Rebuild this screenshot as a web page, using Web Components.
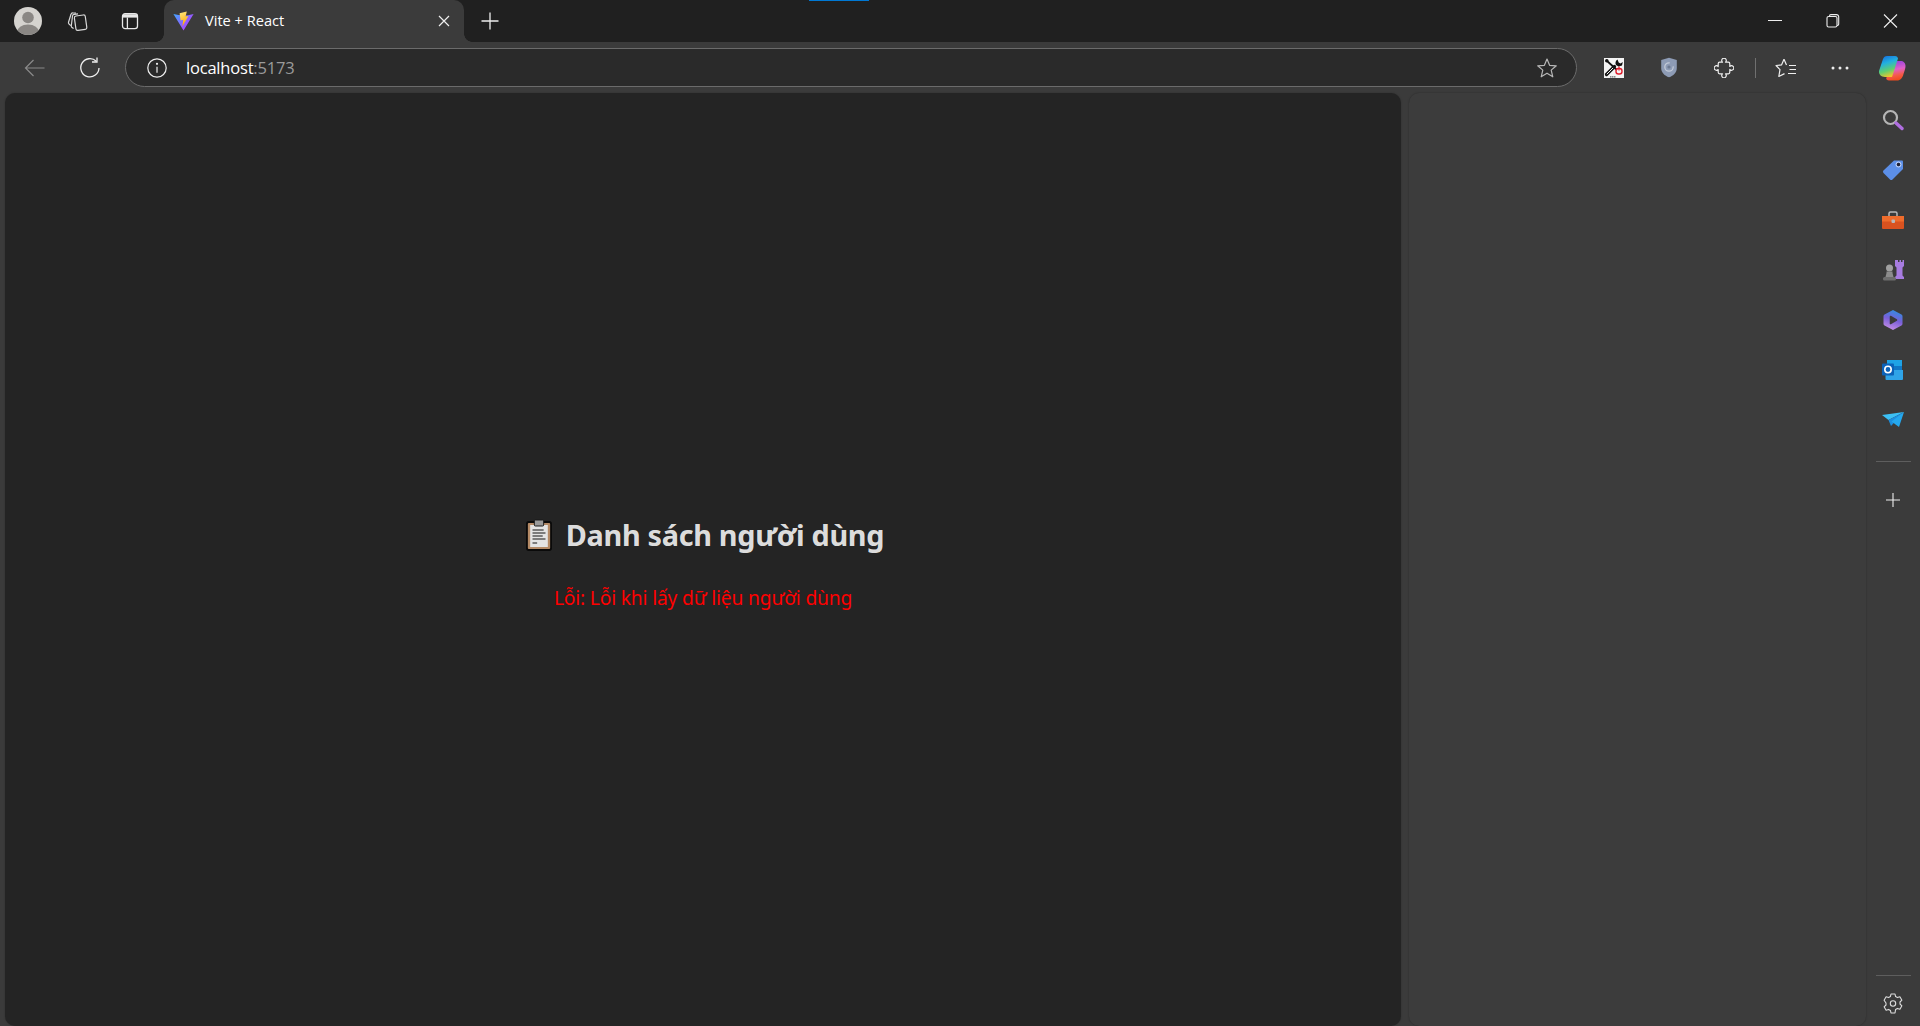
<!DOCTYPE html>
<html>
<head>
<meta charset="utf-8">
<title>Vite + React</title>
<style>
  html, body { margin: 0; height: 100%; background: #3b3b3b; overflow: hidden; }
  body { font-family: "Noto Sans", "Open Sans", sans-serif; }
</style>
</head>
<body>
<browser-window>
  <tab-strip slot="strip"></tab-strip>
  <nav-toolbar slot="toolbar"></nav-toolbar>
  <page-view slot="page">
    <user-list></user-list>
  </page-view>
  <side-panel slot="panel"></side-panel>
  <icon-rail slot="rail"></icon-rail>
</browser-window>

<script>
class BrowserWindow extends HTMLElement {
  connectedCallback() {
    this.attachShadow({ mode: 'open' });
    this.shadowRoot.innerHTML = `
      <style>
        :host { display: flex; flex-direction: column; width: 1920px; height: 1026px; background: #3b3b3b; }
        .content { flex: 1; display: flex; min-height: 0; padding-left: 5px; }
      </style>
      <slot name="strip"></slot>
      <slot name="toolbar"></slot>
      <div class="content">
        <slot name="page"></slot>
        <slot name="panel"></slot>
        <slot name="rail"></slot>
      </div>
    `;
  }
}

class TabStrip extends HTMLElement {
  connectedCallback() {
    this.attachShadow({ mode: 'open' });
    this.shadowRoot.innerHTML = `
      <style>
        :host { display: flex; align-items: center; height: 42px; background: #202020; position: relative; color: #fff; }
        svg { display: block; flex: none; }
        .left { display: flex; align-items: center; height: 42px; padding-left: 14px; width: 164px; box-sizing: border-box; flex: none; }
        .avatar { width: 28px; height: 28px; }
        .collections { margin-left: 24px; width: 22px; height: 22px; }
        .tabs-btn { margin-left: 32px; width: 20px; height: 20px; }
        .tab { width: 300px; height: 42px; background: #3b3b3b; border-radius: 10px 10px 0 0; display: flex; align-items: center; box-sizing: border-box; padding: 0 13px 0 9px; position: relative; flex: none; }
        .tab::before, .tab::after { content: ''; position: absolute; bottom: 0; width: 8px; height: 8px; }
        .tab::before { left: -8px; background: radial-gradient(circle at 0 0, transparent 7.5px, #3b3b3b 8px); }
        .tab::after { right: -8px; background: radial-gradient(circle at 100% 0, transparent 7.5px, #3b3b3b 8px); }
        .fav { width: 21px; height: 20px; }
        .title { margin: 0 0 2px 11px; flex: 1; white-space: nowrap; font-family: "Open Sans", "Noto Sans", sans-serif; font-size: 14.6px; }
        .close { width: 14px; height: 14px; }
        .plus { margin-left: 16px; width: 20px; height: 20px; }
        .spacer { flex: 1; }
        .wc { display: flex; align-items: center; height: 42px; }
        .wc svg { width: 58px; height: 14px; }
        .accent { position: absolute; top: 0; left: 809px; width: 60px; height: 1px; background: #0078d4; }
      </style>
      <div class="left">
        <svg class="avatar" viewBox="0 0 28 28">
          <defs><clipPath id="av"><circle cx="14" cy="14" r="14"/></clipPath></defs>
          <circle cx="14" cy="14" r="14" fill="#d5d3cf"/>
          <g clip-path="url(#av)" fill="#8a8784"><circle cx="14" cy="10.5" r="5.8"/><ellipse cx="14" cy="25" rx="11" ry="7.5"/></g>
        </svg>
        <svg class="collections" viewBox="0 0 22 22" fill="none" stroke="#d8d8d8" stroke-width="1.2" stroke-linejoin="round">
          <rect x="9" y="5.500" width="11" height="14.500" rx="1.800" transform="rotate(-8 14 12)"/>
          <path d="M7.600 18.500 6 17.400a1.600 1.600 0 0 1-.7-1.600L6.500 6a1.800 1.800 0 0 1 1.800-1.600L12 3.800"/>
          <path d="M4.800 15.600 3 14a1.600 1.600 0 0 1-.5-1.700L5 4.300A1.800 1.800 0 0 1 7 3l3 .2"/>
        </svg>
        <svg class="tabs-btn" viewBox="0 0 20 20" fill="none" stroke="#e8e8e8" stroke-width="1.3">
          <rect x="2.500" y="2.600" width="15" height="15" rx="2.600"/>
          <path d="M3 3.200h14v3.400H3z" fill="#e8e8e8" stroke="none"/>
          <path d="M7.400 6.500v11"/>
        </svg>
      </div>
      <div class="tab">
        <svg class="fav" viewBox="0 0 21 20">
          <defs>
            <linearGradient id="vb" x1="0" y1="0" x2="1" y2="0.7"><stop offset="0" stop-color="#41a8ff"/><stop offset="1" stop-color="#bd34fe"/></linearGradient>
            <linearGradient id="vy" x1="0" y1="0" x2="0.3" y2="1"><stop offset="0" stop-color="#ffea83"/><stop offset="1" stop-color="#ffa800"/></linearGradient>
          </defs>
          <path d="M0.400 3 10.500 19.600 20.600 3 15 4.200 10.500 4.600 5.500 4z" fill="url(#vb)"/>
          <path d="M6.600 2.200 13.800 0.500 12.600 5.600 15.400 5 9.400 15.400 10.200 8.800 7.600 9.400z" fill="url(#vy)"/>
        </svg>
        <span class="title">Vite + React</span>
        <svg class="close" viewBox="0 0 14 14" stroke="#eee" stroke-width="1.200"><path d="M2 2l10 10M12 2 2 12"/></svg>
      </div>
      <svg class="plus" viewBox="0 0 20 20" stroke="#eee" stroke-width="1.300"><path d="M10 1.500v17M1.500 10h17"/></svg>
      <div class="spacer"></div>
      <div class="wc">
        <svg viewBox="0 0 58 14" stroke="#eee" stroke-width="1" fill="none"><path d="M22 6.500h14"/></svg>
        <svg viewBox="0 0 58 14" stroke="#eee" stroke-width="1.100" fill="none"><rect x="23" y="2.500" width="10" height="10.500" rx="1.600"/><path d="M25.500 2.500V2a1.400 1.400 0 0 1 1.400-1.400h5.600A2.200 2.200 0 0 1 34.700 2.800v7A1.600 1.600 0 0 1 33 11.500"/></svg>
        <svg viewBox="0 0 58 14" stroke="#eee" stroke-width="1.100" fill="none"><path d="M22 0.500l13 13M35 0.500l-13 13"/></svg>
      </div>
      <div class="accent"></div>
    `;
  }
}

class NavToolbar extends HTMLElement {
  connectedCallback() {
    this.attachShadow({ mode: 'open' });
    this.shadowRoot.innerHTML = `
      <style>
        :host { display: flex; align-items: center; height: 51px; background: #3b3b3b; color: #fff; }
        svg { display: block; flex: none; }
        .back { margin-left: 24px; }
        .reload { margin-left: 33px; }
        .omni { margin-left: 24px; width: 1452px; height: 39px; box-sizing: border-box; border: 1px solid #6b6b6b; border-radius: 20px; background: #2a2a2a; display: flex; align-items: center; padding: 0 19px 0 21px; flex: none; }
        .url { margin-left: 19px; flex: 1; font-size: 16.5px; letter-spacing: -0.2px; font-family: "Open Sans", "Noto Sans", sans-serif; }
        .url span { color: #9a9a9a; }
        .sep { width: 1px; height: 20px; background: #707070; margin-left: 21px; flex: none; }
      </style>
      <svg class="back" width="22" height="20" viewBox="0 0 22 20" fill="none" stroke="#8a8a8a" stroke-width="1.200"><path d="M1.500 10h19M9.500 2l-8 8 8 8"/></svg>
      <svg class="reload" width="22" height="22" viewBox="0 0 22 22" fill="none" stroke="#f0f0f0" stroke-width="1.300"><path d="M17.300 4.300A9.100 9.100 0 1 0 20 11"/><path d="M18 0.500v4.500h-5"/></svg>
      <div class="omni">
        <svg width="20" height="20" viewBox="0 0 20 20" fill="none" stroke="#eee" stroke-width="1.200"><circle cx="10" cy="10" r="9.200"/><path d="M10 8.800v6"/><circle cx="10" cy="5.800" r="0.500" fill="#eee"/></svg>
        <div class="url">localhost<span>:5173</span></div>
        <svg width="20" height="20" viewBox="0 0 20 20" fill="none" stroke="#b8b8b8" stroke-width="1.200" stroke-linejoin="round"><path d="M10 1 12.600 7.300 19.300 7.800 14.200 12.100 15.800 18.800 10 15.200 4.200 18.800 5.800 12.100 0.700 7.800 7.400 7.300z"/></svg>
      </div>
      <svg style="margin-left:27px" width="20" height="20" viewBox="0 0 20 20">
        <rect width="20" height="20" fill="#f4f4f4"/>
        <path d="M2.500 16.500 10.500 8.500" stroke="#111" stroke-width="3.200" stroke-linecap="round"/>
        <path d="M2.800 16.200 10 9" stroke="#f4f4f4" stroke-width="1"/>
        <path d="M2.500 2.500l11 10" stroke="#111" stroke-width="1.700"/>
        <circle cx="2.800" cy="2.800" r="1.800" fill="#111"/>
        <path d="M13.500 1.500a4 4 0 0 0-1.500 5.500l2.500 1.500 3.500-1 .8-3.500-2.300 1.500-1.800-1z" fill="#111"/>
        <rect x="12" y="10.500" width="6" height="5.500" rx="2.500" fill="#f4f4f4" stroke="#e01f2d" stroke-width="1.400"/>
        <path d="M15 8.500v4" stroke="#e01f2d" stroke-width="1.200"/>
        <path d="M6 18.800h6" stroke="#666" stroke-width="1.200" stroke-dasharray="1.500 .5"/>
      </svg>
      <svg style="margin-left:36px" width="18" height="21" viewBox="0 0 18 21">
        <path d="M9 .8 16.800 3v8c0 4.700-3.400 7.700-7.800 9.300C4.600 18.700 1.200 15.700 1.200 11V3z" fill="#8d9bb5"/>
        <circle cx="9" cy="10" r="4.200" fill="none" stroke="#c2cad8" stroke-width="1.300" stroke-dasharray="20 5"/>
        <circle cx="9" cy="10" r="1.600" fill="#6d7a92"/>
      </svg>
      <svg style="margin-left:36px" width="20" height="20" viewBox="0 0 20 20" fill="none" stroke="#eee" stroke-width="1.200" stroke-linejoin="round"><path d="M8.500 4.200A2.300 2.300 0 1 1 11.500 4.200H14.300Q15.800 4.200 15.800 5.700V8.500A2.300 2.300 0 1 1 15.800 11.500V14.300Q15.800 15.800 14.300 15.800H11.500A2.300 2.300 0 1 1 8.500 15.800H5.700Q4.200 15.800 4.200 14.300V11.500A2.300 2.300 0 1 1 4.200 8.500V5.700Q4.200 4.200 5.700 4.200Z"/></svg>
      <div class="sep"></div>
      <svg style="margin-left:19px" width="22" height="20" viewBox="0 0 22 20" fill="none" stroke="#eee" stroke-width="1.200" stroke-linejoin="round"><path d="M9 1.200 11.500 6.900M9 1.200 6.500 6.900 1 7.500 5 11.600 3.800 18.500 9.500 15.600"/><path d="M14 7.500h7M14.500 11.500h6.500M13 15.500h8"/></svg>
      <svg style="margin-left:34px" width="18" height="4" viewBox="0 0 18 4" fill="#eee"><circle cx="2" cy="2" r="1.500"/><circle cx="9" cy="2" r="1.500"/><circle cx="16" cy="2" r="1.500"/></svg>
      <svg style="margin-left:29px" width="28" height="26" viewBox="0 0 28 26">
        <defs>
          <linearGradient id="cp1" x1="0.200" y1="0" x2="0.500" y2="1"><stop offset="0" stop-color="#1670e0"/><stop offset=".35" stop-color="#22b0e0"/><stop offset=".7" stop-color="#5fcf70"/><stop offset="1" stop-color="#f2c52a"/></linearGradient>
          <linearGradient id="cp2" x1="0.300" y1="0" x2="0.500" y2="1"><stop offset="0" stop-color="#9040e0"/><stop offset=".45" stop-color="#e060c8"/><stop offset=".75" stop-color="#f55a4a"/><stop offset="1" stop-color="#f04a1a"/></linearGradient>
        </defs>
        <path d="M19 6h3.500c3 0 5 2 5 5 0 2-1 5-2 8-1 4-3 6.500-6.500 6.500H11c-1.800 0-2.800-1-2.800-2.500l10-16C18 6.500 18.500 6 19 6z" fill="url(#cp2)"/>
        <path d="M9 1h8c2 0 2.500 1 3 2.500L14 22H7C3 22 .6 19 1 16L5 4C5.800 2 7 1 9 1z" fill="url(#cp1)"/>
      </svg>
    `;
  }
}

class PageView extends HTMLElement {
  connectedCallback() {
    this.attachShadow({ mode: 'open' });
    this.shadowRoot.innerHTML = `
      <style>
        :host { display: flex; align-items: center; justify-content: center; width: 1396px; flex: none; background: #242424; border-radius: 10px; box-shadow: 0 0 2px rgba(0,0,0,.25); }
      </style>
      <slot></slot>
    `;
  }
}

class UserList extends HTMLElement {
  connectedCallback() {
    this.attachShadow({ mode: 'open' });
    this.shadowRoot.innerHTML = `
      <style>
        :host { display: block; text-align: center; font-family: "Noto Sans", "Open Sans", sans-serif; margin-top: 9px; }
        h2 { margin: 0; padding-left: 4px; display: flex; align-items: center; justify-content: center; gap: 14px; font-size: 28.8px; letter-spacing: -0.3px; line-height: 36px; font-weight: 700; color: rgba(255,255,255,.87); }
        p { margin: 32px 0 0; font-size: 19.2px; letter-spacing: -0.16px; line-height: 26px; color: #ff0000; }
      </style>
      <h2>
        <svg width="26" height="32" viewBox="0 0 28 32" preserveAspectRatio="none">
          <rect x="1" y="3" width="26" height="28" rx="2" fill="#b48a66" stroke="#0a0a0a" stroke-width="2"/>
          <rect x="4.500" y="6" width="19" height="22" fill="#e4e4e4"/>
          <rect x="9" y="1" width="10" height="6" rx="1" fill="#9a9a9a" stroke="#1a1a1a"/>
          <path d="M7 11h12M7 14h14M7 17h11M7 20h14M7 24h5" stroke="#5a5a5a" stroke-width="1.500"/>
        </svg>
        <span>Danh sách người dùng</span>
      </h2>
      <p>Lỗi: Lỗi khi lấy dữ liệu người dùng</p>
    `;
  }
}

class SidePanel extends HTMLElement {
  connectedCallback() {
    this.attachShadow({ mode: 'open' });
    this.shadowRoot.innerHTML = `
      <style>
        :host { display: block; width: 457px; flex: none; margin-left: 8px; background: #3c3c3c; border-radius: 10px; box-shadow: 0 0 2px rgba(0,0,0,.3); }
      </style>
    `;
  }
}

class IconRail extends HTMLElement {
  connectedCallback() {
    this.attachShadow({ mode: 'open' });
    this.shadowRoot.innerHTML = `
      <style>
        :host { display: flex; flex-direction: column; align-items: center; flex: 1; }
        svg { display: block; }
        .item { height: 50px; display: flex; align-items: center; justify-content: center; flex: none; box-sizing: border-box; }
        .first { margin-top: 2px; }
        hr { width: 35px; height: 1px; border: 0; background: #5e5e5e; margin: 0; flex: none; }
        .top-hr { margin-top: 16px; }
        .add { height: 76px; }
        .grow { flex: 1; }
        .gear { padding-top: 4px; }
      </style>
      <div class="item first">
        <svg width="22" height="22" viewBox="0 0 22 22" fill="none"><circle cx="8.500" cy="8.500" r="6.500" stroke="#b5b5b5" stroke-width="2.200"/><path d="M14 14l6 5.500" stroke="#b06ee0" stroke-width="3.400" stroke-linecap="round"/></svg>
      </div>
      <div class="item">
        <svg width="22" height="22" viewBox="0 0 22 22"><path d="M12 1.500h8a1 1 0 0 1 1 1V10L10.500 20.500a1.800 1.800 0 0 1-2.500 0L1.500 14a1.800 1.800 0 0 1 0-2.500z" fill="#5c8fe8"/><circle cx="16.500" cy="5.500" r="1.800" fill="#223"/><circle cx="16.500" cy="5.500" r="2.500" fill="none" stroke="#cdd9f5"/></svg>
      </div>
      <div class="item">
        <svg width="22" height="18" viewBox="0 0 22 18"><path d="M7 5V2.500A1.500 1.500 0 0 1 8.500 1h5A1.500 1.500 0 0 1 15 2.500V5" fill="none" stroke="#b8b8b8" stroke-width="1.500"/><rect y="5" width="22" height="13" rx="1" fill="#d9521f"/><rect y="5" width="22" height="5.500" fill="#ef6c2c"/><rect x="9.500" y="8.500" width="3.500" height="3.500" rx="1" fill="#b8b8b8"/></svg>
      </div>
      <div class="item">
        <svg width="22" height="22" viewBox="0 0 22 22"><path d="M14 1h2v2h1.500V1h1.500v2h1.500V1H22v6l-1.500 1.500v8L22 18v2h-9v-2l1.500-1.500v-8L13 7V1z" fill="#a77ce0"/><circle cx="7.500" cy="9" r="3.500" fill="#a0a0a0"/><path d="M4.500 12.500h6v1.500l1 4h-8l1-4z" fill="#8c8c8c"/><rect x="1" y="18" width="13" height="3.500" rx="1.500" fill="#6e6e6e"/></svg>
      </div>
      <div class="item">
        <svg width="22" height="22" viewBox="0 0 22 22">
          <defs><linearGradient id="m1" x1="0.700" y1="0" x2="0.400" y2="1"><stop offset="0" stop-color="#2c8fe0"/><stop offset=".5" stop-color="#7a5fd8"/><stop offset="1" stop-color="#c48ee6"/></linearGradient></defs>
          <path d="M11 1 19.500 5.500a2 2 0 0 1 1 1.800v7.400a2 2 0 0 1-1 1.800L11 21 2.500 16.500a2 2 0 0 1-1-1.800V7.300a2 2 0 0 1 1-1.800z" fill="url(#m1)"/>
          <path d="M8.500 7.500 14.500 11 8.500 14.500z" fill="#3b3b3b" stroke="#3b3b3b" stroke-width="1.500" stroke-linejoin="round"/>
        </svg>
      </div>
      <div class="item">
        <svg width="22" height="20" viewBox="0 0 22 20"><rect x="5" y="0" width="15" height="6" fill="#1ea3e6"/><path d="M5 6h15v6H5z" fill="#1077c6"/><path d="M3.500 10 21 10v9a1 1 0 0 1-1 1H4.500a1 1 0 0 1-1-1z" fill="#2fa4e8"/><rect y="3.500" width="12" height="12" rx="1" fill="#0b62b8"/><circle cx="6" cy="9.500" r="3.200" fill="none" stroke="#fff" stroke-width="1.600"/></svg>
      </div>
      <div class="item">
        <svg width="22" height="16" viewBox="0 0 22 16"><path d="M0 3 22 0 6.500 8z" fill="#3cc0f5"/><path d="M22 0 6.500 8 9 14z" fill="#1c8fe0"/><path d="M22 0 17 15 9.500 9.500z" fill="#25a8ee"/></svg>
      </div>
      <hr class="top-hr">
      <div class="item add">
        <svg width="16" height="16" viewBox="0 0 16 16" stroke="#eee" stroke-width="1.100"><path d="M8 1v14M1 8h14"/></svg>
      </div>
      <div class="grow"></div>
      <hr>
      <div class="item gear">
        <svg width="20" height="21" viewBox="0 0 20 21" fill="none" stroke="#ddd" stroke-width="1.100" stroke-linejoin="round"><path d="M8 1h4l.6 2.600 1.800 1 2.500-.8 2 3.400-1.900 1.800v2l1.900 1.800-2 3.400-2.500-.8-1.800 1L12 20H8l-.6-2.600-1.800-1-2.500.8-2-3.400 1.900-1.800v-2L1.100 7.200l2-3.400 2.500.8 1.800-1z"/><circle cx="10" cy="10.500" r="2.700"/></svg>
      </div>
    `;
  }
}

customElements.define('browser-window', BrowserWindow);
customElements.define('tab-strip', TabStrip);
customElements.define('nav-toolbar', NavToolbar);
customElements.define('page-view', PageView);
customElements.define('user-list', UserList);
customElements.define('side-panel', SidePanel);
customElements.define('icon-rail', IconRail);
</script>
</body>
</html>
